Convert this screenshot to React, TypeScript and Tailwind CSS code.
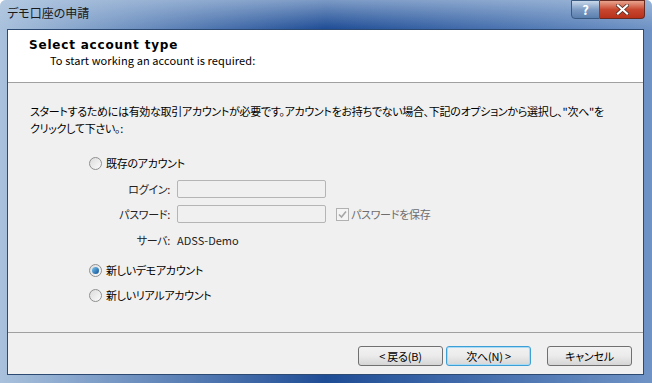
import React from 'react';

const font = { fontFamily: '"Noto Sans CJK JP", "DejaVu Sans", sans-serif' };

const Radio: React.FC<{ checked?: boolean; label: string }> = ({ checked, label }) => (
  <div className="flex items-center gap-[4px] h-[14px]">
    <span className="w-[13px] h-[13px] rounded-full border border-[#8f8f8f] bg-gradient-to-br from-[#dcdcdc] to-[#fbfbfb] flex items-center justify-center">
      {checked && <span className="w-[7px] h-[7px] rounded-full bg-gradient-to-br from-[#7ac8f0] to-[#0a4f95]" />}
    </span>
    <span className="text-[11px] tracking-[-0.3px] text-black leading-none">{label}</span>
  </div>
);

const Field: React.FC<{ label: string; children: React.ReactNode }> = ({ label, children }) => (
  <div className="flex items-center h-[18px]">
    <span className="w-[110px] text-right text-[11px] tracking-[-0.3px] text-[#222] pr-[7px] leading-none">{label}</span>
    {children}
  </div>
);

const Btn: React.FC<{ label: string; focused?: boolean }> = ({ label, focused }) => (
  <div
    className={`w-[85px] h-[20px] rounded-[3px] border flex items-center justify-center text-[11px] tracking-[-0.2px] leading-none text-black bg-gradient-to-b from-[#f2f2f2] via-[#ebebeb] to-[#d5d5d5] ${
      focused ? 'border-[#3c9fd6] shadow-[inset_0_0_0_1px_#a8dbf5]' : 'border-[#707070]'
    }`}
  >
    {label}
  </div>
);

export default function App() {
  return (
    <div className="w-[652px] h-[383px] overflow-hidden bg-white [font-feature-settings:'palt']" style={font}>
      <div className="w-full h-full rounded-t-[6px] bg-gradient-to-r from-[#a9c1dc] via-[#1e4c95] to-[#6f93c5] flex flex-col">
        {/* title bar */}
        <div className="h-[29px] flex items-start shrink-0 bg-gradient-to-b from-[#b9cde4]/60 to-transparent rounded-t-[6px]">
          <span className="text-[12px] text-[#1a1a1a] leading-none mt-[7px] ml-[7px]">デモ口座の申請</span>
          <div className="ml-auto mr-[7px] flex">
            <div className="w-[29px] h-[19px] rounded-bl-[4px] border border-[#3b5a82] bg-gradient-to-b from-[#c8d8ea] via-[#7e9cc4] to-[#5a7fae] flex items-center justify-center text-white text-[13px] font-bold leading-none">?</div>
            <div className="w-[45px] h-[19px] rounded-br-[4px] border border-l-0 border-[#6b2a1f] bg-gradient-to-b from-[#e8a48f] via-[#c8472f] to-[#b8311a] flex items-center justify-center">
              <svg width="13" height="11" viewBox="0 0 13 11">
                <path d="M2 1.5 L11 9.5 M11 1.5 L2 9.5" stroke="#4a2a22" strokeWidth="3.6" strokeLinecap="square" />
                <path d="M2 1.5 L11 9.5 M11 1.5 L2 9.5" stroke="#ffffff" strokeWidth="2.2" strokeLinecap="square" />
              </svg>
            </div>
          </div>
        </div>
        {/* client area */}
        <div className="flex-1 ml-[7px] mr-[8px] mb-[8px] border border-[#2d4a72] bg-[#f0f0f0] flex flex-col">
          <div className="h-[53px] bg-white border-b border-[#a0a0a0] pl-[21px] pt-[9px] shrink-0">
            <div className="text-[12px] tracking-[0.8px] font-bold text-black leading-none" style={{ fontFamily: '"DejaVu Sans", sans-serif' }}>
              Select account type
            </div>
            <div className="text-[11px] tracking-[0.1px] text-black leading-none mt-[4px] ml-[21px]">To start working an account is required:</div>
          </div>
          <div className="flex-1 flex flex-col pl-[22px] pt-[20px]">
            <div className="text-[11px] tracking-[-0.3px] text-black leading-[17px] whitespace-nowrap">
              スタートするためには有効な取引アカウントが必要です。アカウントをお持ちでない場合、下記のオプションから選択し、"次へ"を
              <br />
              クリックして下さい。:
            </div>
            <div className="pl-[59px] mt-[19px] flex flex-col">
              <Radio label="既存のアカウント" />
              <div className="mt-[10px] flex flex-col gap-[7px] -ml-[22px]">
                <Field label="ログイン:">
                  <div className="w-[149px] h-[18px] border border-[#b5b5b5] rounded-[2px] bg-[#f0f0f0]" />
                </Field>
                <Field label="パスワード:">
                  <div className="w-[149px] h-[18px] border border-[#b5b5b5] rounded-[2px] bg-[#f0f0f0]" />
                  <div className="ml-[10px] flex items-center gap-[2px]">
                    <span className="w-[13px] h-[13px] border border-[#b1b1b1] bg-[#f4f4f4] flex items-center justify-center">
                      <svg width="9" height="9" viewBox="0 0 9 9">
                        <path d="M1 4.5 L3.5 7 L8 1.5" stroke="#a6a6a6" strokeWidth="1.6" fill="none" />
                      </svg>
                    </span>
                    <span className="text-[11px] tracking-[-0.3px] text-[#6d6d6d] leading-none">パスワードを保存</span>
                  </div>
                </Field>
                <div className="flex items-center h-[18px] mt-[1px]">
                  <span className="w-[110px] text-right text-[11px] tracking-[-0.3px] text-[#222] pr-[7px] leading-none">サーバ:</span>
                  <span className="text-[11px] text-[#222] leading-none">ADSS-Demo</span>
                </div>
              </div>
              <div className="mt-[14px] flex flex-col gap-[11px]">
                <Radio checked label="新しいデモアカウント" />
                <Radio label="新しいリアルアカウント" />
              </div>
            </div>
          </div>
          <div className="h-[42px] border-t border-[#a0a0a0] shrink-0 flex items-start justify-end pt-[13px] pr-[11px]">
            <Btn label="< 戻る(B)" />
            <div className="ml-[3px]">
              <Btn label="次へ(N) >" focused />
            </div>
            <div className="ml-[16px]">
              <Btn label="キャンセル" />
            </div>
          </div>
        </div>
      </div>
    </div>
  );
}
